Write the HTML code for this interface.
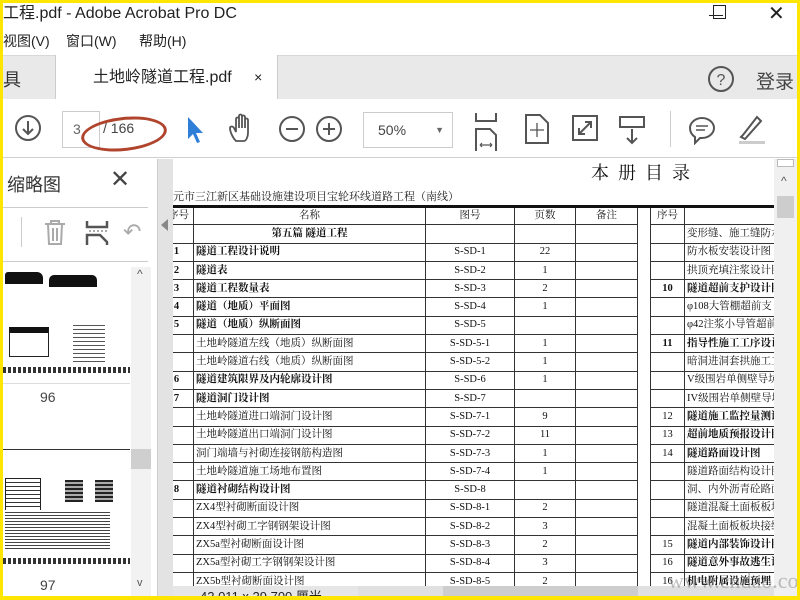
<!DOCTYPE html>
<html><head><meta charset="utf-8"><style>
*{margin:0;padding:0;box-sizing:border-box}
body{width:800px;height:600px;overflow:hidden;background:#ffe600;position:relative;font-family:"Liberation Sans","Noto Sans CJK SC",sans-serif}
#app{position:absolute;left:3px;top:3px;width:794px;height:593px;background:#fff;overflow:hidden}
.abs{position:absolute}
.title{left:0;top:0;height:24px;font-size:16px;color:#222;line-height:22px}
.menu{top:28px;font-size:14px;color:#222}
.tabbar{left:0;top:52px;width:794px;height:44px;background:#e9e9e9;border-top:1px solid #d8d8d8}
.tab{left:52px;top:52px;width:223px;height:45px;background:#fff;border-left:1px solid #ccc;border-right:1px solid #ccc;font-size:16px;line-height:44px;padding-left:37px;color:#222;white-space:nowrap}
.toolbar{left:0;top:96px;width:794px;height:59px;background:#fff;border-bottom:1px solid #d0d0d0}
.left{left:0;top:156px;width:155px;height:437px;background:#fff;border-right:1px solid #ccc}
.strip{left:155px;top:156px;width:15px;height:437px;background:#e3e3e3}
.page{left:170px;top:156px;width:601px;height:427px;background:#fff;overflow:hidden}
.vs{left:771px;top:156px;width:23px;height:437px;background:#f0f0f0}
table{border-collapse:collapse;table-layout:fixed;font-family:"Liberation Serif","Noto Serif CJK SC",serif;font-size:10.5px;color:#111}
td{height:18.3px;border:1px solid #333;padding:0 2px;white-space:nowrap;overflow:hidden;line-height:16px}
td.c{text-align:center}
tr.b td{font-weight:bold}
.status{left:170px;top:583px;width:601px;height:10px;background:#e0e0e0}
</style></head><body><div id="app">
<div class="abs title" style="left:0">工程.pdf - Adobe Acrobat Pro DC</div>
<div class="abs" style="left:706px;top:12px;width:14px;height:1px;background:#222"></div>
<div class="abs" style="left:710px;top:2px;width:13px;height:14px;border:1px solid #222"></div>
<div class="abs" style="left:765px;top:-2px;font-size:20px;color:#222">✕</div>
<div class="abs menu" style="left:0">视图(V)</div>
<div class="abs menu" style="left:63px">窗口(W)</div>
<div class="abs menu" style="left:136px">帮助(H)</div>
<div class="abs tabbar"></div>
<div class="abs" style="left:0;top:63px;font-size:18px;color:#333">具</div>
<div class="abs tab">土地岭隧道工程.pdf <span style="margin-left:18px;font-size:14px">×</span></div>
<svg class="abs" style="left:704px;top:62px" width="28" height="28"><circle cx="14" cy="14" r="12" fill="none" stroke="#555" stroke-width="2"/><text x="14" y="20" font-size="16" text-anchor="middle" fill="#555" font-family="Liberation Sans">?</text></svg>
<div class="abs" style="left:753px;top:64px;font-size:19px;color:#444">登录</div>
<div class="abs toolbar"></div>
<svg class="abs" style="left:10px;top:110px" width="30" height="30"><circle cx="15" cy="15" r="12" fill="none" stroke="#555" stroke-width="2"/><path d="M15 8v13M10 16l5 5 5-5" fill="none" stroke="#555" stroke-width="2"/></svg>
<div class="abs" style="left:59px;top:108px;width:38px;height:37px;border:1px solid #ccc;font-size:14px;color:#666;line-height:35px;padding-left:10px">3</div>
<div class="abs" style="left:100px;top:117px;font-size:14px;color:#444">/ 166</div>
<div class="abs" style="left:78px;top:114px;width:86px;height:34px;border:3px solid #b0442c;border-radius:50%;transform:rotate(-6deg)"></div>
<svg class="abs" style="left:182px;top:112px" width="20" height="30"><path d="M3 2v22l5-5 4 9 3-1-4-9h7z" fill="#2f7fd9"/></svg>
<svg class="abs" style="left:225px;top:110px" width="30" height="32"><path d="M8 28c-4-4-6-10-6-13 0-2 3-2 4 0l2 4V6c0-2 3-2 3 0v9V3c0-2 3-2 3 0v12V4c0-2 3-2 3 0v11V7c0-2 3-2 3 0v13c0 4-2 8-4 8z" fill="none" stroke="#555" stroke-width="1.8"/></svg>
<svg class="abs" style="left:275px;top:112px" width="28" height="28"><circle cx="14" cy="14" r="12" fill="none" stroke="#555" stroke-width="2"/><path d="M8 14h12" stroke="#555" stroke-width="2"/></svg>
<svg class="abs" style="left:312px;top:112px" width="28" height="28"><circle cx="14" cy="14" r="12" fill="none" stroke="#555" stroke-width="2"/><path d="M8 14h12M14 8v12" stroke="#555" stroke-width="2"/></svg>
<div class="abs" style="left:360px;top:109px;width:90px;height:36px;border:1px solid #ccc;font-size:14px;color:#444;line-height:34px;padding-left:14px">50%<span style="position:absolute;right:8px;font-size:9px;color:#666">▼</span></div>
<svg class="abs" style="left:470px;top:110px" width="28" height="38"><path d="M3 0v8h20V0M3 38V16h14l6 6v16" fill="none" stroke="#555" stroke-width="2"/><path d="M7 32h12M7 32l2-2M7 32l2 2M19 32l-2-2M19 32l-2 2" stroke="#555" stroke-width="1.2"/></svg>
<svg class="abs" style="left:520px;top:110px" width="28" height="32"><path d="M3 2h14l8 8v20H3z" fill="none" stroke="#555" stroke-width="2"/><path d="M14 10v14M7 17h14" stroke="#555" stroke-width="1.3"/></svg>
<svg class="abs" style="left:568px;top:111px" width="28" height="30"><rect x="2" y="2" width="24" height="24" fill="none" stroke="#555" stroke-width="2"/><path d="M8 20l12-12M14 8h6v6M8 14v6h6" fill="none" stroke="#555" stroke-width="2"/></svg>
<svg class="abs" style="left:615px;top:112px" width="28" height="32"><rect x="2" y="2" width="24" height="10" fill="none" stroke="#555" stroke-width="2"/><path d="M14 14v14M9 23l5 5 5-5" fill="none" stroke="#555" stroke-width="2"/></svg>
<div class="abs" style="left:667px;top:108px;width:1px;height:36px;background:#ccc"></div>
<svg class="abs" style="left:684px;top:112px" width="30" height="30"><path d="M15 3c7 0 12 5 12 10s-5 10-12 10h-2l-5 5v-6c-3-2-5-5-5-9 0-5 5-10 12-10z" fill="none" stroke="#555" stroke-width="2"/><path d="M9 11h12M9 15h9" stroke="#555" stroke-width="1.5"/></svg>
<svg class="abs" style="left:732px;top:110px" width="32" height="32"><path d="M6 24l4 2 16-18-4-4L8 22z" fill="none" stroke="#555" stroke-width="2"/><rect x="4" y="28" width="26" height="3" fill="#ccc"/></svg>

<div class="abs left">
<div class="abs" style="left:4px;top:12px;font-size:18px;color:#333">缩略图</div>
<div class="abs" style="left:107px;top:6px;font-size:24px;color:#444">✕</div>
<div class="abs" style="left:0;top:48px;width:145px;height:1px;background:#ccc"></div>
<div class="abs" style="left:18px;top:58px;width:1px;height:30px;background:#ccc"></div>
<svg class="abs" style="left:40px;top:60px" width="24" height="28"><path d="M2 5h20M8 5V2h8v3M5 5l1 20h12l1-20M10 9v13M14 9v13" fill="none" stroke="#aaa" stroke-width="2"/></svg>
<svg class="abs" style="left:82px;top:60px" width="24" height="28"><path d="M2 2v6h20V2M2 26V16h13l7 7v3" fill="none" stroke="#555" stroke-width="2.5"/><path d="M4 12h18" stroke="#555" stroke-dasharray="2 2"/></svg>
<div class="abs" style="left:120px;top:60px;font-size:22px;color:#aaa">↶</div>
<div class="abs" style="left:0;top:102px;width:145px;height:1px;background:#ccc"></div>
<div class="abs" style="left:0;top:110px;width:127px;height:115px;background:#fff;border-bottom:1px solid #ddd">
<div class="abs" style="left:2px;top:3px;width:38px;height:12px;background:#111;border-radius:3px 6px 0 0"></div>
<div class="abs" style="left:46px;top:6px;width:48px;height:12px;background:#111;border-radius:5px 5px 0 0"></div>
<div class="abs" style="left:6px;top:58px;width:40px;height:30px;border:1px solid #222;border-top:6px solid #111"></div>
<div class="abs" style="left:70px;top:56px;width:32px;height:40px;background:repeating-linear-gradient(#555 0 1px,#fff 1px 4px)"></div>
<div class="abs" style="left:0;top:98px;width:127px;height:6px;background:repeating-linear-gradient(90deg,#333 0 3px,#fff 3px 5px)"></div>
</div>
<div class="abs" style="left:37px;top:230px;font-size:14px;color:#444">96</div>
<div class="abs" style="left:0;top:290px;width:127px;height:118px;background:#fff;border-top:1px solid #333">
<div class="abs" style="left:2px;top:28px;width:36px;height:42px;background:repeating-linear-gradient(#fff 0 3px,#333 3px 4px);border:1px solid #222"></div>
<div class="abs" style="left:62px;top:30px;width:18px;height:22px;background:repeating-linear-gradient(#222 0 2px,#aaa 2px 4px)"></div>
<div class="abs" style="left:92px;top:30px;width:18px;height:22px;background:repeating-linear-gradient(#222 0 2px,#aaa 2px 4px)"></div>
<div class="abs" style="left:2px;top:60px;width:105px;height:40px;background:repeating-linear-gradient(#fff 0 2px,#444 2px 3px)"></div>
<div class="abs" style="left:0;top:108px;width:127px;height:6px;background:repeating-linear-gradient(90deg,#333 0 3px,#fff 3px 5px)"></div>
</div>
<div class="abs" style="left:37px;top:418px;font-size:14px;color:#444">97</div>
<div class="abs" style="left:128px;top:108px;width:20px;height:329px;background:#f2f2f2"></div>
<div class="abs" style="left:134px;top:108px;font-size:12px;color:#555">^</div>
<div class="abs" style="left:128px;top:290px;width:20px;height:20px;background:#cfcfcf"></div>
<div class="abs" style="left:134px;top:418px;font-size:11px;color:#555">v</div>
</div>
<div class="abs strip"></div>
<div class="abs" style="left:158px;top:216px;width:0;height:0;border-top:6px solid transparent;border-bottom:6px solid transparent;border-right:7px solid #888"></div>

<div class="abs page">
<div class="abs" style="left:418px;top:0;font-family:'Liberation Serif','Noto Serif CJK SC',serif;font-size:18px;letter-spacing:9px;color:#111">本册目录</div>
<div class="abs" style="left:0;top:29px;font-family:'Liberation Serif','Noto Serif CJK SC',serif;font-size:11px;color:#222">元市三江新区基础设施建设项目宝轮环线道路工程（南线）</div>
<table class="abs" style="left:-10px;top:46px;width:640px;border-top:3px solid #111">
<colgroup><col style="width:30px"><col style="width:232px"><col style="width:89px"><col style="width:61px"><col style="width:62px"><col style="width:13px"><col style="width:34px"><col style="width:119px"></colgroup>
<tr><td class="c">序号</td><td class="c">名称</td><td class="c">图号</td><td class="c">页数</td><td class="c">备注</td><td style="border-top:0;border-bottom:0"></td><td class="c">序号</td><td></td></tr>
<tr><td></td><td class="c"><b>第五篇 隧道工程</b></td><td></td><td></td><td></td><td style="border:0;border-left:1px solid #333"></td><td></td><td>变形缝、施工缝防水</td></tr>
<tr class="b"><td>&nbsp;&nbsp;&nbsp;1</td><td>隧道工程设计说明</td><td class="c" style="font-weight:normal">S-SD-1</td><td class="c" style="font-weight:normal">22</td><td></td><td style="border:0;border-left:1px solid #333"></td><td></td><td style="font-weight:normal">防水板安装设计图</td></tr>
<tr class="b"><td>&nbsp;&nbsp;&nbsp;2</td><td>隧道表</td><td class="c" style="font-weight:normal">S-SD-2</td><td class="c" style="font-weight:normal">1</td><td></td><td style="border:0;border-left:1px solid #333"></td><td></td><td style="font-weight:normal">拱顶充填注浆设计图</td></tr>
<tr class="b"><td>&nbsp;&nbsp;&nbsp;3</td><td>隧道工程数量表</td><td class="c" style="font-weight:normal">S-SD-3</td><td class="c" style="font-weight:normal">2</td><td></td><td style="border:0;border-left:1px solid #333"></td><td class="c">10</td><td>隧道超前支护设计图</td></tr>
<tr class="b"><td>&nbsp;&nbsp;&nbsp;4</td><td>隧道（地质）平面图</td><td class="c" style="font-weight:normal">S-SD-4</td><td class="c" style="font-weight:normal">1</td><td></td><td style="border:0;border-left:1px solid #333"></td><td></td><td style="font-weight:normal">φ108大管棚超前支</td></tr>
<tr class="b"><td>&nbsp;&nbsp;&nbsp;5</td><td>隧道（地质）纵断面图</td><td class="c" style="font-weight:normal">S-SD-5</td><td></td><td></td><td style="border:0;border-left:1px solid #333"></td><td></td><td style="font-weight:normal">φ42注浆小导管超前</td></tr>
<tr><td></td><td>土地岭隧道左线（地质）纵断面图</td><td class="c">S-SD-5-1</td><td class="c">1</td><td></td><td style="border:0;border-left:1px solid #333"></td><td class="c"><b>11</b></td><td><b>指导性施工工序设计</b></td></tr>
<tr><td></td><td>土地岭隧道右线（地质）纵断面图</td><td class="c">S-SD-5-2</td><td class="c">1</td><td></td><td style="border:0;border-left:1px solid #333"></td><td></td><td>暗洞进洞套拱施工工</td></tr>
<tr class="b"><td>&nbsp;&nbsp;&nbsp;6</td><td>隧道建筑限界及内轮廓设计图</td><td class="c" style="font-weight:normal">S-SD-6</td><td class="c" style="font-weight:normal">1</td><td></td><td style="border:0;border-left:1px solid #333"></td><td></td><td style="font-weight:normal">V级围岩单侧壁导坑</td></tr>
<tr class="b"><td>&nbsp;&nbsp;&nbsp;7</td><td>隧道洞门设计图</td><td class="c" style="font-weight:normal">S-SD-7</td><td></td><td></td><td style="border:0;border-left:1px solid #333"></td><td></td><td style="font-weight:normal">IV级围岩单侧壁导坑</td></tr>
<tr><td></td><td>土地岭隧道进口端洞门设计图</td><td class="c">S-SD-7-1</td><td class="c">9</td><td></td><td style="border:0;border-left:1px solid #333"></td><td class="c">12</td><td><b>隧道施工监控量测设</b></td></tr>
<tr><td></td><td>土地岭隧道出口端洞门设计图</td><td class="c">S-SD-7-2</td><td class="c">11</td><td></td><td style="border:0;border-left:1px solid #333"></td><td class="c">13</td><td><b>超前地质预报设计图</b></td></tr>
<tr><td></td><td>洞门端墙与衬砌连接钢筋构造图</td><td class="c">S-SD-7-3</td><td class="c">1</td><td></td><td style="border:0;border-left:1px solid #333"></td><td class="c">14</td><td><b>隧道路面设计图</b></td></tr>
<tr><td></td><td>土地岭隧道施工场地布置图</td><td class="c">S-SD-7-4</td><td class="c">1</td><td></td><td style="border:0;border-left:1px solid #333"></td><td></td><td>隧道路面结构设计图</td></tr>
<tr class="b"><td>&nbsp;&nbsp;&nbsp;8</td><td>隧道衬砌结构设计图</td><td class="c" style="font-weight:normal">S-SD-8</td><td></td><td></td><td style="border:0;border-left:1px solid #333"></td><td></td><td style="font-weight:normal">洞、内外沥青砼路面</td></tr>
<tr><td></td><td>ZX4型衬砌断面设计图</td><td class="c">S-SD-8-1</td><td class="c">2</td><td></td><td style="border:0;border-left:1px solid #333"></td><td></td><td>隧道混凝土面板板块</td></tr>
<tr><td></td><td>ZX4型衬砌工字钢钢架设计图</td><td class="c">S-SD-8-2</td><td class="c">3</td><td></td><td style="border:0;border-left:1px solid #333"></td><td></td><td>混凝土面板板块接缝</td></tr>
<tr><td></td><td>ZX5a型衬砌断面设计图</td><td class="c">S-SD-8-3</td><td class="c">2</td><td></td><td style="border:0;border-left:1px solid #333"></td><td class="c">15</td><td><b>隧道内部装饰设计图</b></td></tr>
<tr><td></td><td>ZX5a型衬砌工字钢钢架设计图</td><td class="c">S-SD-8-4</td><td class="c">3</td><td></td><td style="border:0;border-left:1px solid #333"></td><td class="c">16</td><td><b>隧道意外事故逃生设</b></td></tr>
<tr><td></td><td>ZX5b型衬砌断面设计图</td><td class="c">S-SD-8-5</td><td class="c">2</td><td></td><td style="border:0;border-left:1px solid #333"></td><td class="c">16</td><td><b>机电附属设施预埋</b></td></tr>
</table>
</div>
<div class="abs vs"><div class="abs" style="left:3px;top:0;width:17px;height:8px;border:1px solid #bbb;background:#fff"></div><div class="abs" style="left:7px;top:15px;font-size:12px;color:#555">^</div><div class="abs" style="left:3px;top:37px;width:17px;height:22px;background:#cdcdcd"></div></div>
<div class="abs status"><div class="abs" style="left:0;top:0;width:185px;height:10px;background:#e6e6e6;font-size:13px;line-height:22px;color:#222;padding-left:27px;overflow:hidden">42.011 x 29.700 厘米</div><div class="abs" style="left:270px;top:0;width:195px;height:10px;background:#cdcdcd"></div></div>
<div class="abs" style="left:665px;top:565px;font-family:'Liberation Serif',serif;font-size:22px;color:rgba(120,120,120,0.45)">www.cndao.com</div>
</div></body></html>
